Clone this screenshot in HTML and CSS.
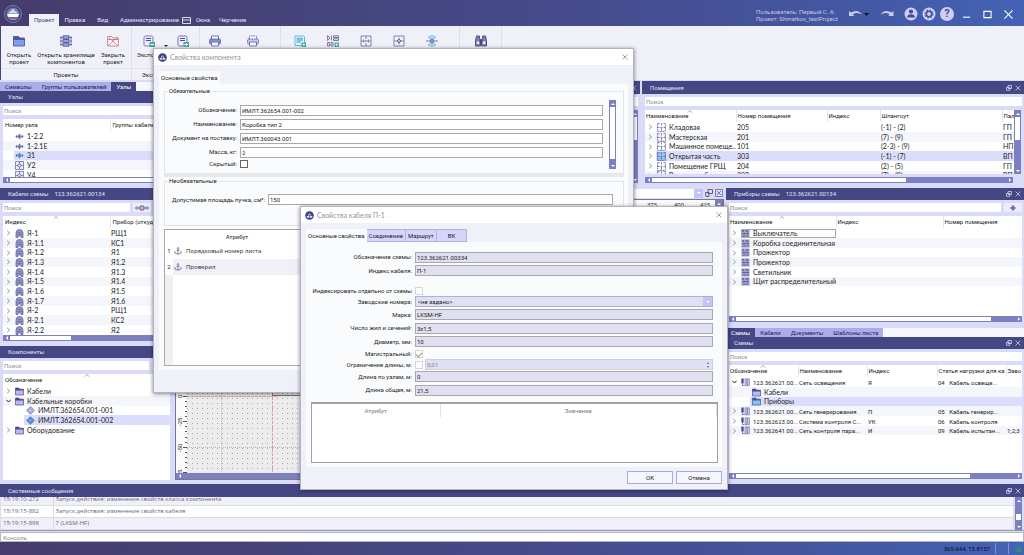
FILE: index.html
```html
<!DOCTYPE html>
<html lang="ru">
<head>
<meta charset="utf-8">
<title>Shmatkov_testProject</title>
<link rel="stylesheet" href="styles.css">
</head>
<body>
<svg class="defs" aria-hidden="true">
  <defs>
    <symbol id="logo" viewBox="0 0 18 18"><circle cx="9" cy="9" r="8.500" fill="#3b4077" stroke="#8f92bd" stroke-width=".8"/><circle cx="9" cy="9" r="6.600" fill="#6f78ad"/><path d="M4 8.500 6 6h1.500V4h3v2H12l2 2.500z" fill="#cfd4ec"/><path d="M3 9h12l-1.500 3h-9z" fill="#fff"/><path d="M4 12h10l-2 2H6z" fill="#b1466b"/><path d="M5 13.500h8l-2 1.500H7z" fill="#4ca5dc"/></symbol>
    <symbol id="mini" viewBox="0 0 10 10"><circle cx="5" cy="5" r="4.800" fill="#3d4384"/><path d="M1.500 5.500h7l-1 2h-5zM3 5l2-3 2 3z" fill="#d6daf2"/><path d="M5 1v7" stroke="#3d4384" stroke-width=".6"/></symbol>
    <symbol id="chev" viewBox="0 0 5 6"><path d="M1.200.8 3.600 3 1.200 5.200" fill="none" stroke="currentColor" stroke-width=".8"/></symbol>
    <symbol id="chevd" viewBox="0 0 5 6"><path d="M.4 1.800 2.500 4 4.600 1.800" fill="none" stroke="#222" stroke-width="1"/></symbol>
    <symbol id="folder" viewBox="0 0 9 9"><path d="M.5 8V1h3.300l.8 1.200h3.900V8z" fill="#b9b9f0" stroke="#4a4a8c" stroke-width=".7"/><path d="M.5 1h3.300l.8 1.200h3.900v1.200h-8z" fill="#4a4a8c"/></symbol>
    <symbol id="folderb" viewBox="0 0 9 9"><path d="M.5 8V1h3.300l.8 1.200h3.900V8z" fill="#8fbff0" stroke="#31629f" stroke-width=".7"/><path d="M.5 1h3.300l.8 1.200h3.900v1.200h-8z" fill="#31629f"/></symbol>
    <symbol id="room" viewBox="0 0 9 9"><path d="M.6.6v7.800h7.800V.6M.6.6h2M6.500.6h2M4.500.2v3M4.500 5v3.500M.6 4.500h2M3.400 4.500h2.200M6.500 4.500h2" fill="none" stroke="#65659e" stroke-width=".8" stroke-dasharray="2 .5"/></symbol>
    <symbol id="node1" viewBox="0 0 9 9"><path d="M.5 4.500h8M1.500 3v3M7.500 3v3" stroke="currentColor" stroke-width=".7"/><path d="M3.200 3h2.600v3H3.200zM4.500 1.800v5.400" fill="none" stroke="currentColor" stroke-width=".7"/></symbol>
    <symbol id="node2" viewBox="0 0 9 9"><path d="M.5.5h8v8h-8z" fill="#eeeefb" stroke="#5c5c9b" stroke-width=".7"/><path d="M1 4.500h2M6 4.500h2M4.500 1v2M4.500 6v2" stroke="#5c5c9b" stroke-width=".7"/><circle cx="4.500" cy="4.500" r="1.500" fill="none" stroke="#5c5c9b" stroke-width=".8"/></symbol>
    <symbol id="cable" viewBox="0 0 9 9"><path d="M1 8.500V4a3.500 3.500 0 0 1 7 0v4.500H6V7H3v1.500z" fill="#9292c5" stroke="#6a6a9d" stroke-width=".8"/><path d="M2.800 3.500h3.400M2 5.500h5" stroke="#63639a" stroke-width=".6"/></symbol>
    <symbol id="device" viewBox="0 0 9 9"><path d="M.4.4h8.200v8.200H.4z" fill="#a9a9d4"/><path d="M1 2h2M4 2h4M1 4.500h7M1 7h2.500M5 7h3M2 1v2M6 1v2M3 3.700v2M6.500 3.700v2M4 6v2" stroke="#4f4f86" stroke-width=".7"/></symbol>
    <symbol id="scheme" viewBox="0 0 9 9"><path d="M.3.5h2.400v5H.3z" fill="#4c4c8f"/><path d="M1.500 5.500v2h2" fill="none" stroke="#4c4c8f" stroke-width=".7"/><path d="M4 .8h1.800v7H4zM6.600.8h1.800v7H6.600z" fill="#dadaf7" stroke="#5c5c9b" stroke-width=".6"/></symbol>
    <symbol id="comp" viewBox="0 0 9 9"><path d="M4.500.8 8.200 4.500 4.500 8.200.8 4.500z" fill="#c2c2ec" stroke="#5b5b93" stroke-width=".8"/><circle cx="4.500" cy="4.500" r="1.200" fill="#f1f1ff" stroke="#5b5b93" stroke-width=".5"/></symbol>
    <symbol id="compb" viewBox="0 0 9 9"><path d="M4.500.8 8.200 4.500 4.500 8.200.8 4.500z" fill="#5b9fe0" stroke="#31629f" stroke-width=".8"/><circle cx="4.500" cy="4.500" r="1.200" fill="#9fcbf5" stroke="#31629f" stroke-width=".5"/></symbol>
    <symbol id="anchor" viewBox="0 0 8 8"><circle cx="4" cy="1.300" r=".8" fill="none" stroke="#55607e" stroke-width=".6"/><path d="M4 2v5M2.500 3.300h3M.7 5Q1 7.200 4 7.200T7.300 5M.3 5.500l.6-1 .8.800M7.700 5.500l-.6-1-.8.800" fill="none" stroke="#55607e" stroke-width=".7"/></symbol>
    <symbol id="float" viewBox="0 0 6 6"><path d="M2 .5h3.500v3H2zM.5 2.300h3.300v3H.5z" fill="none" stroke="currentColor" stroke-width=".7"/></symbol>
    <symbol id="x" viewBox="0 0 6 6"><path d="m.6.6 4.800 4.800M5.400.6.6 5.400" stroke="currentColor" stroke-width=".7"/></symbol>
    <symbol id="sort" viewBox="0 0 6 3"><path d="m1 2.500 2-2 2 2" fill="none" stroke="#666" stroke-width=".6"/></symbol>
    <symbol id="printer" viewBox="0 0 12 12"><path d="M2.500 4V1h7v3" fill="#fff" stroke="#5865a8" stroke-width=".9"/><rect x=".6" y="4" width="10.800" height="5" rx="1" fill="#7d93d8" stroke="#4a559b" stroke-width=".7"/><path d="M2.500 7h7v4h-7z" fill="#f4f4ff" stroke="#5865a8" stroke-width=".8"/></symbol>
    <symbol id="printer2" viewBox="0 0 12 12"><path d="M2.500 4V1h7v3" fill="#fff" stroke="#5865a8" stroke-width=".9" stroke-dasharray="1.500 .8"/><rect x=".6" y="4" width="10.800" height="5" rx="1" fill="#c3caee" stroke="#4a559b" stroke-width=".8" stroke-dasharray="2 .6"/><path d="M2.500 7h7v4h-7z" fill="#f4f4ff" stroke="#5865a8" stroke-width=".8"/></symbol>
  </defs>
</svg>

<div class="app">
  <header class="titlebar">
    <svg class="logo"><use href="#logo"/></svg>
    <nav class="menu">
      <button class="on">Проект</button>
      <button>Правка</button>
      <button>Вид</button>
      <button class="adm">Администрирование</button>
      <button class="win"><svg viewBox="0 0 9 7"><path d="M.5.500h8v6h-8zM.5 3h8" fill="none" stroke="#e6e6f7" stroke-width=".9"/></svg>Окна</button>
      <button>Черчение</button>
    </nav>
    <div class="who">Пользователь: Первый С. А.<br>Проект: Shmatkov_testProject</div>
    <div class="tools">
      <button aria-label="Отменить" class="undo"><svg viewBox="0 0 22 10"><path d="M1 2v5h5.500L4.700 5.500Q9 2.500 14 5.600 10-.5 2.700 3.600z" fill="#c9cbf0"/><path d="M16 4h5l-2.500 3z" fill="#15152c"/></svg></button>
      <button aria-label="Повторить" class="redo"><svg viewBox="0 0 14 10"><path d="M13.500 2v5H8l1.800-1.500Q5.500 2.500.5 5.600 4.500-.5 11.800 3.600z" fill="#c9cbf0"/></svg></button>
      <button aria-label="Профиль"><svg viewBox="0 0 14 14"><circle cx="7" cy="7" r="6.500" fill="#cfcff8"/><circle cx="7" cy="4.600" r="2.100" fill="#3f4f99"/><path d="M3 10.500Q3.300 7.300 7 7.300t4 3.200z" fill="#3f4f99"/></svg></button>
      <button aria-label="Настройки"><svg viewBox="0 0 14 14"><circle cx="7" cy="7" r="6.500" fill="#cfcff8"/><circle cx="7" cy="7" r="2.700" fill="none" stroke="#3f4f99" stroke-width="1.500"/><circle cx="7" cy="7" r="4" fill="none" stroke="#3f4f99" stroke-width="1.200" stroke-dasharray="1.600 1.540"/></svg></button>
      <button aria-label="Справка" class="help">?</button>
      <button aria-label="Свернуть" class="sys"><svg viewBox="0 0 10 10"><path d="M1 8h8" stroke="#fff" stroke-width="1.200"/></svg></button>
      <button aria-label="Развернуть" class="sys"><svg viewBox="0 0 10 10"><path d="M1 1.500h8v7H1z" fill="none" stroke="#fff" stroke-width="1.200"/></svg></button>
      <button aria-label="Закрыть" class="sys"><svg viewBox="0 0 10 10"><path d="m.5.500 9 9M9.500.500l-9 9" stroke="#fff" stroke-width="1.200"/></svg></button>
    </div>
  </header>

  <div class="ribbon">
    <section class="rgroup g1">
      <div class="rbtns">
        <button class="b-s"><svg viewBox="0 0 12 12"><path d="M.5 11V1.500h5L6.800 3h4.700v8z" fill="#7aa0ec" stroke="#4a4c93" stroke-width=".8"/><path d="M.5 5h11V3H6.800L5.500 1.500h-5z" fill="#5354a0"/></svg><span>Открыть<br>проект</span></button>
        <button class="b-l"><svg viewBox="0 0 12 12"><path d="M3 .8h6v3H3zM3 4.500h6v3H3zM3 8.200h6v3H3z" fill="#93a5e6" stroke="#4a4c93" stroke-width=".8"/><path d="M0 2.500h3M9 2.500h3M0 6h3M9 6h3M0 9.500h3M9 9.500h3M1 1v10M11 1v10" stroke="#4a4c93" stroke-width=".7"/></svg><span>Открыть хранилище<br>компонентов</span></button>
        <button class="b-s"><svg viewBox="0 0 12 12"><path d="M.7 11V1.500h4L6 3h5.300v8zM.7 4.500h10.600" fill="#fff" stroke="#8c6a7d" stroke-width=".7"/><path d="m1.500 2 9 8.500M10.500 2l-9 8.500" stroke="#ec6060" stroke-width=".9"/></svg><span>Закрыть<br>проект</span></button>
      </div>
      <h2>Проекты</h2>
    </section>
    <section class="rgroup g2">
      <div class="rbtns">
        <button class="b-e"><svg viewBox="0 0 12 12"><rect x="1" y="1" width="9" height="10" rx="1.500" fill="#eef" stroke="#7277ae"/><path d="M3 3.500h5M3 5.500h5" stroke="#4a4c93" stroke-width="1.200"/><path d="M6.500 7H12v5H6.500z" fill="#43a79d"/><path d="M7.500 9.500H11" stroke="#fff"/></svg><span>Экспорт</span></button>
        <i class="caret"></i>
        <button class="b-e" aria-label="Импорт"><svg viewBox="0 0 12 12"><rect x="1" y="1" width="9" height="10" rx="1.500" fill="#eef" stroke="#7277ae"/><path d="M3 3.500h5M3 5.500h5" stroke="#4a4c93" stroke-width="1.200"/><path d="M6.500 7H12v5H6.500z" fill="#43a79d"/><path d="M7.500 9.500H11M9.200 8v3" stroke="#fff"/></svg></button>
      </div>
      <h2>Экспорт/Импорт</h2>
    </section>
    <section class="rgroup g3">
      <div class="rbtns">
        <button aria-label="Печать"><svg><use href="#printer"/></svg></button>
        <button aria-label="Печать листов"><svg><use href="#printer2"/></svg></button>
      </div>
    </section>
    <section class="rgroup g4">
      <div class="rbtns">
        <button aria-label="Новый документ"><svg viewBox="0 0 12 12"><path d="M1 1h8.500l1 1v8.500H1z" fill="#e8f8ff" stroke="#5cabd6" stroke-width=".9"/><path d="M2.500 3.500h6.500M2.500 5.200h6.500M2.500 7h4.500" stroke="#57b5e2" stroke-width="1.300"/><path d="M7.500 7.500H12V12H7.500z" fill="#43a79d"/><path d="M8.300 9.700h3M9.800 8.300v3" stroke="#fff" stroke-width=".7"/></svg></button>
        <button aria-label="Новая схема"><svg viewBox="0 0 12 12"><path d="M.6.500v5M.6.500 3 3 .6 5.500M4.500.500v5M6.500.8h5v1.700h-5zM6.500 3.800h5v1.700h-5zM.6 7.500h2v3.500h-2zM4 7.500h2v3.500H4z" fill="none" stroke="#5a5a91" stroke-width=".8"/><path d="M7.500 7.500H12V12H7.500z" fill="#43a79d"/><path d="M8.300 9.700h3M9.800 8.300v3" stroke="#fff" stroke-width=".7"/></svg></button>
        <button aria-label="Помещение"><svg viewBox="0 0 12 12"><path d="M1 1h10v10H1zM6 1v3M6 5v2M6 8v3M1 6h2M4 6h1.500M6.500 6H8M9 6h2M3.500 4.500v3M8.500 4.500v3" fill="none" stroke="#6a6aa0" stroke-width=".8"/></svg></button>
        <button aria-label="Узел"><svg viewBox="0 0 12 12"><path d="M1 1h10v10H1zM1 6h3M8 6h3M6 2.500V4M6 8v1.500" fill="none" stroke="#6a6aa0" stroke-width=".8"/><path d="m6 4 2 2-2 2-2-2z" fill="#b6b6df" stroke="#4a4a85" stroke-width=".8"/></svg></button>
        <button aria-label="Трассировка"><svg viewBox="0 0 12 12"><path d="M2 2q4-3 8 0L8 4Q6 2.500 4 4zM2 10q4 3 8 0L8 8q-2 1.500-4 0z" fill="#a5dff0" stroke="#5bb6d2" stroke-width=".6"/><path d="M0 6h12" stroke="#5a5a91" stroke-width=".8"/><circle cx="6" cy="6" r="1.800" fill="#9a9ad0" stroke="#5a5a91" stroke-width=".7"/></svg></button>
      </div>
    </section>
    <section class="rgroup g5">
      <div class="rbtns">
        <button aria-label="Поиск"><svg viewBox="0 0 12 12"><path d="M1.500 1h3v2l1 2v6H.5V6zM10.500 1h-3v2l-1 2v6h5V6zM5 5h2v3H5z" fill="#8080b5" stroke="#4a4378" stroke-width=".9"/><path d="M1.700 6.500h2.500v2.500H1.700zM7.800 6.500h2.500v2.500H7.800z" fill="#eef"/></svg></button>
      </div>
    </section>
  </div>

  <main class="work">
    <div class="left">
      <div class="tabs"><button>Символы</button><button>Группы пользователей</button><button class="on">Узлы</button></div>
      <section class="panel nodes">
        <h3>Узлы</h3>
        <div class="body">
          <div class="find"><input aria-label="Поиск узла" placeholder="Поиск"></div>
          <div class="list">
            <table class="grid">
              <colgroup><col class="w107"><col></colgroup>
              <thead><tr><th>Номер узла</th><th>Группы кабелей</th></tr></thead>
              <tbody>
                <tr><td><span class="node leaf"><svg class="ink"><use href="#node1"/></svg>1-2.2</span></td><td></td></tr>
                <tr><td><span class="node leaf"><svg class="ink"><use href="#node1"/></svg>1-2.1E</span></td><td></td></tr>
                <tr class="sel"><td><span class="node leaf"><svg class="blue"><use href="#node1"/></svg>31</span></td><td></td></tr>
                <tr><td><span class="node leaf"><svg><use href="#node2"/></svg>У2</span></td><td></td></tr>
                <tr><td><span class="node leaf"><svg><use href="#node2"/></svg>У4</span></td><td></td></tr>
              </tbody>
            </table>
          </div>
          <div class="hbar"><i></i><b class="full"></b><i class="r"></i></div>
        </div>
      </section>
      <section class="panel cables">
        <h3>Кабели схемы <span>123.362621.00134</span></h3>
        <div class="body">
          <div class="find"><input aria-label="Поиск кабеля" placeholder="Поиск"><button aria-label="Связи" class="link"><svg viewBox="0 0 14 6"><path d="M3 3h8" stroke="#55558f" stroke-width=".8"/><circle cx="1.800" cy="3" r="1.200" fill="none" stroke="#55558f" stroke-width=".8"/><circle cx="12.200" cy="3" r="1.200" fill="none" stroke="#55558f" stroke-width=".8"/><path d="M5 1h4v4H5z" fill="#eba7c2" stroke="#55558f" stroke-width=".8"/></svg></button><button aria-label="Маршрут"></button></div>
          <div class="list">
            <table class="grid">
              <colgroup><col class="w107"><col></colgroup>
              <thead><tr><th>Индекс<svg class="sort"><use href="#sort"/></svg></th><th>Прибор (откуда)</th></tr></thead>
              <tbody>
                <tr><td><span class="node"><svg class="chev"><use href="#chev"/></svg><svg><use href="#cable"/></svg>Я-1</span></td><td>РЩ1</td></tr>
                <tr><td><span class="node"><svg class="chev"><use href="#chev"/></svg><svg><use href="#cable"/></svg>Я-1.1</span></td><td>КС1</td></tr>
                <tr><td><span class="node"><svg class="chev"><use href="#chev"/></svg><svg><use href="#cable"/></svg>Я-1.2</span></td><td>Я1</td></tr>
                <tr><td><span class="node"><svg class="chev"><use href="#chev"/></svg><svg><use href="#cable"/></svg>Я-1.3</span></td><td>Я1.2</td></tr>
                <tr><td><span class="node"><svg class="chev"><use href="#chev"/></svg><svg><use href="#cable"/></svg>Я-1.4</span></td><td>Я1.3</td></tr>
                <tr><td><span class="node"><svg class="chev"><use href="#chev"/></svg><svg><use href="#cable"/></svg>Я-1.5</span></td><td>Я1.4</td></tr>
                <tr><td><span class="node"><svg class="chev"><use href="#chev"/></svg><svg><use href="#cable"/></svg>Я-1.6</span></td><td>Я1.5</td></tr>
                <tr><td><span class="node"><svg class="chev"><use href="#chev"/></svg><svg><use href="#cable"/></svg>Я-1.7</span></td><td>Я1.6</td></tr>
                <tr><td><span class="node"><svg class="chev"><use href="#chev"/></svg><svg><use href="#cable"/></svg>Я-2</span></td><td>РЩ1</td></tr>
                <tr><td><span class="node"><svg class="chev"><use href="#chev"/></svg><svg><use href="#cable"/></svg>Я-2.1</span></td><td>КС2</td></tr>
                <tr><td><span class="node"><svg class="chev"><use href="#chev"/></svg><svg><use href="#cable"/></svg>Я-2.2</span></td><td>Я2</td></tr>
              </tbody>
            </table>
          </div>
          <div class="hbar"><i></i><b class="third"></b><i class="r"></i></div>
        </div>
      </section>
      <section class="panel comps">
        <h3>Компоненты</h3>
        <div class="body">
          <div class="find"><input aria-label="Поиск компонента" placeholder="Поиск"><button aria-label="Фильтр"></button></div>
          <div class="list">
            <table class="grid">
              <thead><tr><th>Обозначение<svg class="sort"><use href="#sort"/></svg></th></tr></thead>
              <tbody>
                <tr><td><span class="node"><svg class="chev"><use href="#chev"/></svg><svg><use href="#folder"/></svg>Кабели</span></td></tr>
                <tr><td><span class="node"><svg class="chev"><use href="#chevd"/></svg><svg><use href="#folder"/></svg>Кабельные коробки</span></td></tr>
                <tr><td><span class="node child"><svg><use href="#comp"/></svg>ИМЛТ.362654.001-001</span></td></tr>
                <tr class="sel deep"><td><span class="node child"><svg><use href="#compb"/></svg>ИМЛТ.362654.001-002</span></td></tr>
                <tr><td><span class="node"><svg class="chev"><use href="#chev"/></svg><svg><use href="#folder"/></svg>Оборудование</span></td></tr>
              </tbody>
            </table>
          </div>
        </div>
      </section>
    </div>

    <div class="rest">
      <div class="top">
        <section class="panel mid">
          <h3><span class="pbtns"><button aria-label="Закрыть"><svg><use href="#x"/></svg></button></span></h3>
          <div class="body"><div class="find"><input aria-label="Поиск символа"></div><div class="row"><div class="list"></div><div class="vbar"><i></i><b></b><i class="d"></i></div></div></div>
        </section>
        <section class="panel rooms">
          <h3>Помещения<span class="pbtns"><button aria-label="Открепить"><svg><use href="#float"/></svg></button><button aria-label="Закрыть"><svg><use href="#x"/></svg></button></span></h3>
          <div class="body">
            <div class="find"><input aria-label="Поиск помещения" placeholder="Поиск"></div>
            <div class="row">
              <div class="list">
                <table class="grid">
                  <colgroup><col class="w91"><col class="w91"><col class="w53"><col class="w122"><col></colgroup>
                  <thead><tr><th>Наименование<svg class="sort"><use href="#sort"/></svg></th><th>Номер помещения</th><th>Индекс</th><th>Шпангоут</th><th>Пал</th></tr></thead>
                  <tbody>
                    <tr><td><span class="node"><svg class="chev"><use href="#chev"/></svg><svg><use href="#room"/></svg>Кладовая</span></td><td>205</td><td></td><td>(-1) - (2)</td><td>ГП</td></tr>
                    <tr><td><span class="node"><svg class="chev"><use href="#chev"/></svg><svg><use href="#room"/></svg>Мастерская</span></td><td>201</td><td></td><td>(7) - (9)</td><td>ГП</td></tr>
                    <tr><td><span class="node"><svg class="chev"><use href="#chev"/></svg><svg><use href="#room"/></svg>Машинное помеще...</span></td><td>101</td><td></td><td>(2-3) - (9)</td><td>НП</td></tr>
                    <tr class="sel"><td><span class="node"><svg class="chev"><use href="#chev"/></svg><svg class="hot"><use href="#room"/></svg>Открытая часть</span></td><td>303</td><td></td><td>(-1) - (7)</td><td>ВП</td></tr>
                    <tr><td><span class="node"><svg class="chev"><use href="#chev"/></svg><svg><use href="#room"/></svg>Помещение ГРЩ</span></td><td>204</td><td></td><td>(2) - (5)</td><td>ГП</td></tr>
                    <tr><td><span class="node"><svg class="chev"><use href="#chev"/></svg><svg><use href="#room"/></svg>Рулевая рубка</span></td><td>302</td><td></td><td>(7) - (9)</td><td>ВП</td></tr>
                  </tbody>
                </table>
              </div>
              <div class="vbar"><i></i><b></b><i class="d"></i></div>
            </div>
            <div class="hbar"><i></i><b class="p70"></b><i class="r"></i></div>
          </div>
        </section>
      </div>

      <div class="bottom">
        <section class="draft">
          <div class="dbar">
            <span class="combo"><select aria-label="Лист"><option></option></select><i></i></span>
            <button aria-label="Открепить лист"><svg viewBox="0 0 8 8"><path d="M3 .5h4.500v4H3zM.5 3.500h3.500V7.500h-3z" fill="none" stroke="#444468" stroke-width=".8"/></svg></button>
            <button aria-label="Закрыть лист"><svg viewBox="0 0 8 8"><path d="M.5.500h7v7h-7zM2 2l4 4M6 2 2 6" fill="none" stroke="#666699" stroke-width=".8"/></svg></button>
          </div>
          <div class="frame">
            <div class="row">
              <svg class="sheet">
                <defs><pattern id="dots" x="16" y="203" width="5" height="5" patternUnits="userSpaceOnUse"><rect x="0" y="0" width="1" height="1" fill="#aaa"/></pattern></defs>
                <rect width="100%" height="100%" fill="#fbfbfb"/>
                <rect x="11" y="9" width="100%" height="100%" fill="#ececec"/>
                <rect x="11" y="9" width="100%" height="100%" fill="url(#dots)"/>
                <path d="M45.500 9v300M11 247.500h560" stroke="#bbb" stroke-width="1" stroke-dasharray="1 1"/>
                <path d="M96.500 9v300M11 196.500h90" stroke="#e3a0a4" stroke-width="1" stroke-dasharray="3 1"/>
                <path d="M96 195.500h100M96.500 190v6" stroke="#777" fill="none"/>
                <path d="M7 196.500h4M7 221.500h4M7 247.500h4M7 272.500h4M9 201.500h2M9 206.500h2M9 211.500h2M9 216.500h2M9 226.500h2M9 231.500h2M9 237.500h2M9 242.500h2M9 252.500h2M9 257.500h2M9 262.500h2M9 267.500h2" stroke="#555"/>
                <g class="marks"><text transform="translate(6 198) rotate(-90)">0</text><text transform="translate(6 226) rotate(-90)">-25</text><text transform="translate(6 252) rotate(-90)">-50</text><text transform="translate(6 273) rotate(-90)">5</text><text x="471" y="7">375</text><text x="498" y="7">400</text><text x="524" y="7">425</text></g>
              </svg>
              <div class="vbar"><i></i><b></b><i class="d"></i></div>
            </div>
            <div class="hbar"><i></i></div>
          </div>
        </section>

        <div class="right">
          <section class="panel devices">
            <h3>Приборы схемы <span>123.362621.00134</span><span class="pbtns"><button aria-label="Открепить"><svg><use href="#float"/></svg></button><button aria-label="Закрыть"><svg><use href="#x"/></svg></button></span></h3>
            <div class="body">
              <div class="find"><input aria-label="Поиск прибора" placeholder="Поиск"><button aria-label="Навести" class="aim"><svg viewBox="0 0 6 6"><path d="M3 .3 5.700 3 3 5.700.3 3z" fill="#6d70b8"/><path d="M0 3h6M3 0v6" stroke="#6d70b8" stroke-width=".8"/></svg></button></div>
              <div class="list">
                <table class="grid">
                  <colgroup><col class="w107"><col class="w107"><col></colgroup>
                  <thead><tr><th>Наименование<svg class="sort"><use href="#sort"/></svg></th><th>Индекс</th><th>Номер помещения</th></tr></thead>
                  <tbody>
                    <tr><td><span class="node"><svg class="chev"><use href="#chev"/></svg><span class="box"><svg><use href="#device"/></svg>Выключатель</span></span></td><td></td><td></td></tr>
                    <tr><td><span class="node"><svg class="chev"><use href="#chev"/></svg><svg><use href="#device"/></svg>Коробка соединительная</span></td><td></td><td></td></tr>
                    <tr><td><span class="node"><svg class="chev"><use href="#chev"/></svg><svg><use href="#device"/></svg>Прожектор</span></td><td></td><td></td></tr>
                    <tr><td><span class="node"><svg class="chev cyan"><use href="#chev"/></svg><svg><use href="#device"/></svg>Прожектор</span></td><td></td><td></td></tr>
                    <tr><td><span class="node"><svg class="chev"><use href="#chev"/></svg><svg><use href="#device"/></svg>Светильник</span></td><td></td><td></td></tr>
                    <tr><td><span class="node"><svg class="chev"><use href="#chev"/></svg><svg><use href="#device"/></svg>Щит распределительный</span></td><td></td><td></td></tr>
                  </tbody>
                </table>
              </div>
              <div class="hbar"><i></i><b class="p90"></b><i class="r"></i></div>
            </div>
          </section>
          <div class="tabs rt"><button class="on">Схемы</button><button>Кабели</button><button>Документы</button><button>Шаблоны листа</button></div>
          <section class="panel schemes">
            <h3>Схемы<span class="pbtns"><button aria-label="Открепить"><svg><use href="#float"/></svg></button><button aria-label="Закрыть"><svg><use href="#x"/></svg></button></span></h3>
            <div class="body">
              <div class="find"><input aria-label="Поиск схемы" placeholder="Поиск"></div>
              <div class="list">
                <table class="grid">
                  <colgroup><col class="w69"><col class="w69"><col class="w70"><col class="w69"><col></colgroup>
                  <thead><tr><th>Обозначение<svg class="sort"><use href="#sort"/></svg></th><th>Наименование</th><th>Индекс</th><th>Статья нагрузки для ка</th><th>Заво</th></tr></thead>
                  <tbody class="sm">
                    <tr><td><span class="node"><svg class="chev"><use href="#chevd"/></svg><svg><use href="#scheme"/></svg>123.362621.00...</span></td><td>Сеть освещения</td><td>Я</td><td>04 &nbsp; Кабель освеще...</td><td></td></tr>
                    <tr><td><span class="node child"><svg><use href="#folder"/></svg>Кабели</span></td><td></td><td></td><td></td><td></td></tr>
                    <tr class="sel deep"><td><span class="node child"><svg><use href="#folderb"/></svg>Приборы</span></td><td></td><td></td><td></td><td></td></tr>
                    <tr><td><span class="node"><svg class="chev"><use href="#chev"/></svg><svg><use href="#scheme"/></svg>123.362621.00...</span></td><td>Сеть генерирования</td><td>П</td><td>05 &nbsp; Кабель генерир...</td><td></td></tr>
                    <tr><td><span class="node"><svg class="chev"><use href="#chev"/></svg><svg><use href="#scheme"/></svg>123.362623.00...</span></td><td>Система контроля С...</td><td>УК</td><td>06 &nbsp; Кабель контроля</td><td></td></tr>
                    <tr><td><span class="node"><svg class="chev"><use href="#chev"/></svg><svg><use href="#scheme"/></svg>123.362641.00...</span></td><td>Сеть контроля пара...</td><td>И</td><td>09 &nbsp; Кабель испытан...</td><td>1;2;3</td></tr>
                  </tbody>
                </table>
              </div>
              <div class="hbar"><i></i><b class="p83"></b><i class="r"></i></div>
            </div>
          </section>
        </div>
      </div>
    </div>
  </main>

  <section class="panel messages">
    <h3>Системные сообщения<span class="pbtns"><button aria-label="Открепить"><svg><use href="#float"/></svg></button><button aria-label="Закрыть"><svg><use href="#x"/></svg></button></span></h3>
    <div class="row log">
      <div class="logview">
        <table>
          <colgroup><col class="w52"><col></colgroup>
          <tr><td>15:19:10-272</td><td>Запуск действия: изменение свойств класса компонента</td></tr>
          <tr><td>15:19:15-882</td><td>Запуск действия: изменение свойств кабеля</td></tr>
          <tr><td>15:19:15-898</td><td>7 (LKSM-HF)</td></tr>
        </table>
      </div>
      <div class="vbar"><i></i><b></b><i class="d"></i></div>
    </div>
    <input class="console" aria-label="Консоль" placeholder="Консоль">
  </section>
  <footer class="status"><span>369.644, 15.8157</span><i></i><svg viewBox="0 0 9 9"><path d="M1 8 8 1v7z" fill="#2f8f7c"/><path d="M1 2q6 0 7 6M1 5q3 0 4 3" fill="none" stroke="#2f8f7c" stroke-width="1.200"/></svg></footer>
</div>

<div class="dialog component" role="dialog" aria-label="Свойства компонента">
  <div class="dtitle"><svg><use href="#mini"/></svg>Свойства компонента<button aria-label="Закрыть"><svg><use href="#x"/></svg></button></div>
  <div class="dtabs"><button class="on">Основные свойства</button></div>
  <div class="page">
    <fieldset class="req">
      <legend>Обязательные</legend>
      <div class="row">
        <div class="form f1">
          <label for="c1">Обозначение:</label><input id="c1" value="ИМЛТ.362654.001-002">
          <label for="c2">Наименование:</label><input id="c2" value="Коробка тип 2">
          <label for="c3">Документ на поставку:</label><input id="c3" value="ИМЛТ.360043.001">
          <label for="c4">Масса, кг:</label><input id="c4" value="2">
          <label for="c5">Скрытый:</label><input id="c5" type="checkbox">
        </div>
        <div class="vbar"><i></i><b></b><i class="d"></i></div>
      </div>
    </fieldset>
    <div class="split"></div>
    <fieldset class="opt">
      <legend>Необязательные</legend>
      <div class="form f2"><label for="c6">Допустимая площадь пучка, см²:</label><input id="c6" value="150"></div>
    </fieldset>
    <div class="attrs">
      <table>
        <colgroup><col class="w8"><col class="w128"><col></colgroup>
        <tr><th></th><th>Атрибут</th><th></th></tr>
        <tr><th>1</th><td><span class="attr"><svg><use href="#anchor"/></svg>Порядковый номер листа</span></td><td></td></tr>
        <tr><th>2</th><td><span class="attr"><svg><use href="#anchor"/></svg>Проверил</span></td><td></td></tr>
      </table>
    </div>
  </div>
</div>

<div class="dialog cable" role="dialog" aria-label="Свойства кабеля П-1">
  <div class="dtitle"><svg><use href="#mini"/></svg>Свойства кабеля П-1<button aria-label="Закрыть"><svg><use href="#x"/></svg></button></div>
  <div class="dtabs"><button class="on">Основные свойства</button><button>Соединение</button><button>Маршрут</button><button class="vk">ВК</button></div>
  <div class="page">
    <div class="form f3">
      <label for="k1">Обозначение схемы:</label><input id="k1" value="123.362621.00334" readonly>
      <label for="k2">Индекс кабеля:</label><input id="k2" value="П-1" readonly>
      <label for="k3" class="low">Индексировать отдельно от схемы</label><input id="k3" class="low" type="checkbox" disabled>
      <label for="k4">Заводские номера:</label><span class="combo"><select id="k4"><option>&lt;не задано&gt;</option></select><i></i></span>
      <label for="k5">Марка:</label><input id="k5" value="LKSM-HF" readonly>
      <label for="k6">Число жил и сечений:</label><input id="k6" value="3x1,5" readonly>
      <label for="k7">Диаметр, мм:</label><input id="k7" value="10" readonly>
      <label for="k8">Магистральный:</label><input id="k8" type="checkbox" checked disabled>
      <label for="k9">Ограничение длины, м:</label><span class="spin"><input type="checkbox" aria-label="Ограничить длину" disabled><input id="k9" value="0,01" disabled><i></i></span>
      <label for="k10">Длина по узлам, м:</label><input id="k10" value="0" readonly>
      <label for="k11">Длина общая, м:</label><input id="k11" value="21,5" readonly>
    </div>
    <div class="attrs2">
      <table><colgroup><col class="w128"><col></colgroup><tr><th>Атрибут</th><th>Значение</th></tr></table>
    </div>
  </div>
  <div class="actions"><button>ОК</button><button>Отмена</button></div>
</div>
</body>
</html>
```

FILE: styles.css
```css
:root {
  --ui: Roboto, "Open Sans", sans-serif;
  --tree: Lato, Roboto, sans-serif;
  --plain: "Open Sans", "Noto Sans", sans-serif;
  --dark: #444783;
  --lav: #dadaf9;
  --bar: #7c80c0;
  --pale: #f0f0f9;
  --sel: #dcdcfc;
  --grad: linear-gradient(90deg, #463c6c 0%, #46437a 27%, #454b8b 55%, #4457a2 82%, #4462b4 100%);
}
* { box-sizing: border-box; }
html, body { height: 100%; }
body { margin: 0; font: 6px/8px var(--ui); color: #1c1c22; overflow: hidden; }
button, input, select { font: inherit; color: inherit; margin: 0; padding: 0; border: 0; border-radius: 0; background: none; min-width: 0; }
input:focus { outline: 0; }
h2, h3 { margin: 0; font: inherit; }
svg { display: block; flex: none; }
.defs { position: absolute; width: 0; height: 0; }
table { border-collapse: collapse; table-layout: fixed; width: 100%; }
td, th { padding: 0; font-weight: normal; text-align: left; overflow: hidden; white-space: nowrap; }
.row { display: flex; min-height: 0; flex: 1; }
.app { display: flex; flex-direction: column; height: 100vh; background: var(--lav); }

/* title bar */
.titlebar { display: flex; height: 26px; flex: none; background: var(--grad); color: #e6e6f7; }
.logo { width: 18px; height: 18px; margin: 5px 7px 0 4px; }
.menu { display: flex; align-items: flex-end; flex: 1; }
.menu button { height: 12px; padding: 0 5px; display: flex; align-items: center; }
.menu button:nth-child(2), .menu button:nth-child(3) { margin-right: 2px; }
.menu .on { background: var(--pale); color: #3b3b70; }
.menu svg { width: 9px; height: 7px; margin-right: 5px; }
.menu .adm { padding-right: 3px; }
.menu .win { padding: 0 4px 0 0; }
.who { width: 92px; padding-top: 8px; line-height: 7px; color: #c5c7e6; white-space: nowrap; }
.tools { display: flex; align-items: center; gap: 4px; padding: 2px 7px 0 0; }
.tools button { width: 14px; height: 14px; flex: none; display: flex; align-items: center; justify-content: center; }
.tools svg { width: 14px; height: 14px; }
.tools .undo { width: 22px; margin-right: 6px; }
.tools .undo svg { width: 22px; height: 10px; }
.tools .redo { margin-right: 6px; }
.tools .redo svg { height: 10px; }
.tools .help { border-radius: 7px; background: #cfcff8; color: #3f4f99; font-size: 11px; font-weight: bold; }
.tools .sys { width: 17px; }
.tools .sys svg { width: 9px; height: 9px; }

/* ribbon */
.ribbon { display: flex; height: 54px; flex: none; background: var(--pale); border-left: 1px solid var(--dark); }
.rgroup { display: flex; flex-direction: column; border-right: 1px solid #dedeec; }
.rbtns { display: flex; height: 43px; padding-top: 9px; justify-content: center; border-bottom: 1px solid #e2e2ee; align-items: flex-start; }
.rbtns button { flex: none; display: flex; flex-direction: column; align-items: center; gap: 4px; text-align: center; line-height: 7px; white-space: nowrap; }
.rbtns svg { width: 12px; height: 12px; }
.rgroup h2 { text-align: center; line-height: 11px; }
.g1 .b-s { width: 36px; }
.g1 .b-l { width: 58px; }
.g2 .b-e { width: 30px; }
.g2 { width: 68px; }
.caret { margin-top: 10px; border: 2px solid transparent; border-top-color: #222; }
.g3 { width: 81px; }
.g3 .rbtns { gap: 26px; justify-content: flex-start; padding-left: 9px; }
.g4 { width: 179px; }
.g4 .rbtns { gap: 21px; justify-content: flex-start; padding-left: 13px; }
.g5 { width: 42px; }

/* work area */
.work { display: flex; flex: 1; min-height: 0; }
.left { width: 174px; flex: none; display: flex; flex-direction: column; }
.rest { flex: 1; min-width: 0; display: flex; flex-direction: column; }
.top { display: flex; height: 107px; flex: none; gap: 2px; }
.bottom { display: flex; flex: 1; min-height: 0; }
.tabs { display: flex; height: 9px; margin-top: 2px; flex: none; background: #f6f6fd; }
.tabs button { background: #acacec; padding: 0 5px; line-height: 9px; color: #222244; }
.tabs .on { background: var(--dark); color: #fff; }
.panel { display: flex; flex-direction: column; }
.panel h3 { display: flex; align-items: center; height: 12px; flex: none; padding: 0 3px 0 8px; background: var(--dark); color: #e2e2f6; white-space: nowrap; }
.panel h3 > span:not(.pbtns) { margin-left: 6px; }
.pbtns { margin-left: auto; display: flex; gap: 3px; }
.pbtns svg { width: 6px; height: 6px; }
.body { display: flex; flex-direction: column; flex: 1; min-height: 0; padding: 3px 2px 4px 3px; }
.find { display: flex; gap: 3px; height: 9px; flex: none; margin-bottom: 4px; }
.find input { flex: 1; background: #fff; padding-left: 1px; }
.find button { width: 18px; background: #ececfb; display: flex; align-items: center; justify-content: center; }
.find .link svg { width: 14px; height: 6px; }
.find .aim svg { width: 6px; height: 6px; }
::placeholder { color: #8a8a96; opacity: 1; }
.list { flex: 1; min-height: 0; min-width: 0; background: #fff; overflow: hidden; }

.grid th { height: 12px; padding-left: 1px; border-right: 1px solid #e4e4ee; position: relative; line-height: 12px; }
.grid th:last-child { border-right: 0; }
.grid td { padding-left: 1px; line-height: 9px; font-size: 7px; font-family: var(--tree); }
.grid td:first-child { padding-left: 0; }
.grid tbody tr { height: 10px; }
.grid tbody tr:nth-child(3n) { height: 9px; }
.grid tbody tr:nth-child(even) { background: #f5f5fc; }
.grid .sm td { font-size: 6px; font-family: var(--ui); }
.grid .sm .child { font-size: 7px; font-family: var(--tree); }
.grid tbody .sel { background: var(--sel) !important; }
.sel td:first-child { background: linear-gradient(90deg, #fff 11px, var(--sel) 11px); }
.deep td:first-child { background: linear-gradient(90deg, #fff 21px, var(--sel) 21px); }
.sort { position: absolute; left: calc(50% - 3px); top: 0; width: 6px; height: 3px; }
.node { display: flex; align-items: center; height: 9px; padding-left: 3px; }
.node svg { width: 9px; height: 9px; margin-right: 3px; }
.node .chev { width: 5px; height: 6px; margin-right: 4px; color: #777; }
.node .cyan { color: #27b1e6; }
.leaf { padding-left: 12px; }
.child { padding-left: 23px; }
.ink { color: #5c5c9b; }
.blue { color: #2f79bd; }
.hot { background: #8fc4f4; }
.box { display: flex; flex: 1; align-items: center; outline: 1px solid #a8a8a8; outline-offset: -1px; }
.w107 { width: 107px; } .w91 { width: 91px; } .w53 { width: 53px; } .w122 { width: 122px; }
.w69 { width: 69px; } .w70 { width: 70px; } .w52 { width: 52px; } .w128 { width: 128px; } .w8 { width: 8px; }

/* scroll bars */
.hbar, .vbar { display: flex; flex: none; background: var(--bar); }
.hbar { height: 6px; align-items: center; }
.vbar { width: 7px; flex-direction: column; align-items: center; }
.hbar b { height: 4px; background: #fff; }
.vbar b { width: 5px; height: 23px; background: #fff; }
.hbar i { width: 7px; flex: none; height: 4px; display: flex; align-items: center; justify-content: center; }
.vbar i { height: 7px; flex: none; display: flex; align-items: center; justify-content: center; }
.hbar i::before { content: ""; border: 2px solid transparent; border-right: 2px solid #fff; border-left: 0; }
.hbar .r { margin-left: auto; }
.hbar .r::before { border-left: 2px solid #fff; border-right: 0; }
.vbar i::before { content: ""; border: 2px solid transparent; border-bottom: 2px solid #fff; border-top: 0; }
.vbar .d { margin-top: auto; }
.vbar .d::before { border-top: 2px solid #fff; border-bottom: 0; }
.full { width: 100%; } .third { width: 61px; } .p70 { width: 69%; } .p90 { width: 87%; } .p83 { width: 80%; }

.nodes { height: 97px; }
.nodes .body { padding-top: 3px; }
.nodes .body, .cables .body { padding-bottom: 5px; }
.cables { height: 158px; }
.comps { flex: 1; min-height: 0; }
.comps .body { padding-right: 4px; }
.left .grid th, .log td { padding-left: 2px; }
.mid { flex: 1; }
.rooms { width: 382px; }
.rooms, .mid { padding-top: 1px; }
.rooms h3, .mid h3 { height: 13px; }
.rooms .hbar { margin: 3px 9px 0 0; }
.rooms .vbar { margin-right: 1px; }

/* drawing */
.draft { flex: 1; min-width: 0; display: flex; flex-direction: column; padding: 0 2px 4px 1px; }
.dbar { display: flex; height: 12px; flex: none; align-items: center; gap: 2px; padding-right: 1px; }
.dbar .combo { flex: 1; height: 9px; background: #fff; }
.dbar button, .dbar svg { width: 8px; height: 8px; }
.combo { display: grid; grid-template-columns: 1fr 9px; }
.combo select { grid-area: 1 / 1 / 2 / 3; appearance: none; }
.combo i { grid-area: 1 / 2; background: #c3c3f7; display: flex; align-items: center; justify-content: center; pointer-events: none; }
.combo i::before { content: ""; border: 2px solid transparent; border-top-color: #fff; border-bottom: 0; }
.frame { flex: 1; min-height: 0; display: flex; flex-direction: column; border: 1px solid #77778c; border-right-width: 2px; }
.sheet { flex: 1; min-width: 0; height: 100%; }
.marks { font-size: 6px; fill: #333; }

/* right column */
.right { width: 298px; flex: none; display: flex; flex-direction: column; }
.devices { height: 139px; }
.devices h3 { margin-top: 1px; }
.devices .body { padding-bottom: 4px; }
.rt { margin-top: 2px; }
.schemes { flex: 1; min-height: 0; }
.schemes .body { padding-bottom: 5px; }

/* messages */
.messages { flex: none; height: 58px; }
.messages h3 { height: 13px; }
.log { border-bottom: 1px solid #9a9aa8; padding: 0 2px 0 1px; }
.logview { flex: 1; display: flex; align-items: flex-end; overflow: hidden; background: #fff; margin-right: 1px; }
.log td { height: 12px; color: #666672; line-height: 11px; border: 1px solid #dcdce6; border-width: 0 1px 1px 0; font-family: var(--plain); }
.log tr:nth-child(odd) { background: var(--pale); }
.log .vbar b { margin-top: 10px; height: 6px; }
.console { height: 10px; flex: none; margin-top: 1px; padding-left: 2px; background: #fff; border: 1px solid #b4b4c6; }
.status { display: flex; align-items: center; justify-content: flex-end; gap: 5px; height: 13px; flex: none; padding-right: 2px; background: var(--grad); color: #0c0c1e; }
.status i { width: 14px; height: 11px; border: 1px solid #7f94cf; border-width: 0 1px; }
.status svg { width: 8px; height: 8px; }

/* dialogs */
.dialog { position: absolute; display: flex; flex-direction: column; background: var(--pale); border: 1px solid #b4b4b8; box-shadow: 0 1px 4px rgba(20, 20, 50, .55); }
.component { left: 153px; top: 48px; width: 481px; height: 345px; }
.cable.dialog { left: 300px; top: 206px; width: 428px; height: 284px; }
.dtitle { display: flex; align-items: center; height: 16px; flex: none; padding: 0 5px 0 4px; gap: 3px; background: #fff; color: #93939b; font: 7px var(--tree); }
.dtitle > svg { width: 9px; height: 9px; }
.dtitle button { margin-left: auto; color: #777; }
.dtitle button svg { width: 6px; height: 6px; }
.dtabs { display: flex; padding: 6px 5px 0; }
.dtabs button { height: 13px; padding: 0 2px; background: #d5d5fb; border: 1px solid #b3b3e0; border-left: 0; }
.dtabs .on { border: 0; background: #f9fbfc; }
.dtabs .vk { padding: 0 11px; }
.page { background: #f9fbfc; margin: 0 5px; }
.component .page { padding: 3px 4px 4px 5px; display: flex; flex-direction: column; flex: 1; margin-bottom: 22px; }
fieldset { margin: 0; padding: 0; min-width: 0; border: 1px solid #e2e4e8; }
legend { margin-left: 3px; padding: 0 1px; }
.req { height: 87px; display: flex; flex-direction: column; }
.req .row { padding: 5px 7px 4px 0; gap: 6px; height: 78px; }
.req .row .vbar { height: 69px; }
.req .vbar b { height: 52px; }
.form { display: grid; align-items: center; flex: 1; column-gap: 3px; }
.form label { text-align: right; white-space: nowrap; }
.form input:not([type=checkbox]) { height: 11px; padding: 0 1px; border: 1px solid #a9a9a9; background: #fff; width: 100%; }
.form input[type=checkbox] { appearance: none; width: 8px; height: 8px; border: 1px solid #666; background: #fff; display: grid; place-items: center; }
.form input[type=checkbox]:disabled { border-color: #d4d4da; }
.form input[type=checkbox]:checked::before { content: ""; width: 5px; height: 3px; border: 1px solid #999; border-width: 0 0 1px 1px; rotate: -45deg; }
.f1 { grid-template-columns: 72px 1fr; grid-template-rows: 14px 14px 14px 14px 10px; align-content: start; padding-top: 3px; }
.split { height: 3px; background: #e6e8ea; }
.opt { height: 49px; }
.f2 { grid-template-columns: 100px 1fr; padding: 9px 10px 0 0; }
.attrs { flex: 1; margin-top: 3px; background: linear-gradient(90deg, #f0f0f0 8px, #fff 8px); border: 1px solid #a9a9a9; }
.attrs tr { height: 16px; background: #fff; }
.attrs tr:first-child { height: 13px; }
.attrs th { text-align: center; }
.attrs tr:last-child td { background: var(--pale); }
.attrs td { font-family: var(--plain); }
.attr { display: flex; align-items: center; gap: 4px; padding-left: 1px; }
.attr svg { width: 8px; height: 8px; }

.cable .page { padding: 8px 4px 4px 5px; flex: 1; display: flex; flex-direction: column; }
.f3 { flex: none; grid-template-columns: 101px 1fr; grid-template-rows: 14px 13px 18px 13px 13px 14px 13px 11px 11px 13px 14px; padding-right: 5px; }
.f3 .low { align-self: end; }
.cable.dialog .form input:not([type=checkbox]) { background: #e0e0f0; }
.f3 .combo { height: 11px; border: 1px solid #b0b0d8; background: #e0e0f5; }
.f3 .combo select { padding-left: 2px; line-height: 9px; }
.spin { display: grid; grid-template-columns: 8px 1fr; column-gap: 2px; align-items: center; }
.spin > input:nth-child(2) { grid-area: 1 / 2; border-color: #cfcfdd !important; color: #8a8a96; }
.spin i { grid-area: 1 / 2; justify-self: end; margin-right: 4px; display: grid; gap: 2px; pointer-events: none; }
.spin i::before, .spin i::after { content: ""; border: 1px solid transparent; border-bottom: 2px solid #666; border-top: 0; }
.spin i::after { border-bottom: 0; border-top: 2px solid #666; }
.attrs2 { flex: 1; margin-top: 5px; border: 1px solid #a0a0a6; border-top-width: 2px; background: #fff; }
.attrs2 th { text-align: center; height: 13px; color: #777; border-right: 1px solid #e0e0e8; }
.actions { display: flex; justify-content: flex-end; gap: 3px; padding: 4px 5px 5px; }
.actions button { width: 46px; height: 13px; border: 1px solid #aaaadb; background: #f6f6fd; }
```
